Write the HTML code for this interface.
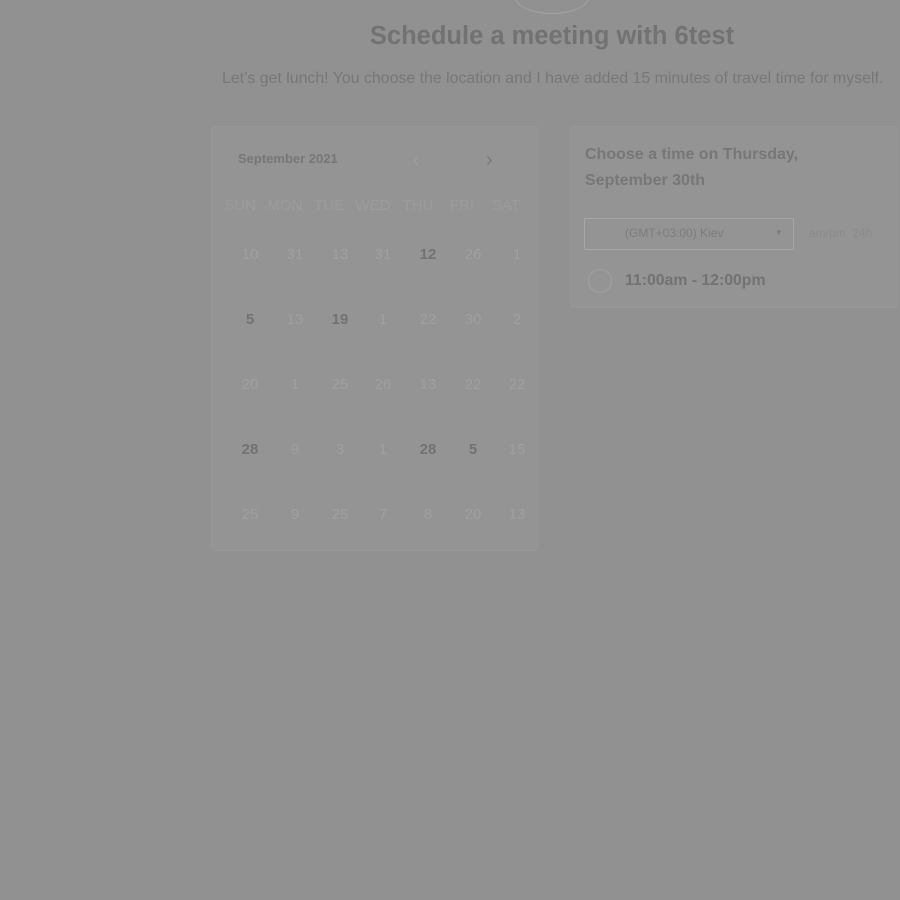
<!DOCTYPE html><html><head><style>
body{margin:0;width:900px;height:900px;background:#919191;font-family:"Liberation Sans",sans-serif;position:relative;overflow:hidden}
.a{position:absolute;white-space:nowrap}
.p{position:absolute;background:#949494;border:1px solid #979797;border-radius:3px}
.n{position:absolute;width:40px;text-align:center;font-size:15px;color:#a0a0a0;transform:translateX(-20px)}
.d{color:#727272;font-weight:bold}
.h{position:absolute;width:44px;text-align:center;font-size:15px;color:#9c9c9c;transform:translateX(-22px)}
</style></head><body>
<div class="a" style="left:515px;top:-20px;width:72px;height:32px;border-radius:50%;border:1px solid #a4a4a4"></div>
<div class="a" style="left:0;width:1104px;top:22px;text-align:center;font-size:25.5px;font-weight:bold;color:#727272">Schedule a meeting with 6test</div>
<div class="a" style="left:222px;top:70px;font-size:15.9px;color:#777">Let’s get lunch! You choose the location and I have added 15 minutes of travel time for myself.</div>
<div class="p" style="left:211px;top:126px;width:325px;height:423px"></div>
<div class="a" style="left:238px;top:151px;font-size:13px;font-weight:bold;color:#777">September 2021</div>
<div class="a" style="left:413px;top:150px;font-size:18px;color:#9e9e9e">‹</div>
<div class="a" style="left:486px;top:149px;font-size:20px;color:#7a7a7a">›</div>
<div class="h" style="left:240px;top:197px">SUN</div><div class="h" style="left:285px;top:197px">MON</div><div class="h" style="left:329px;top:197px">TUE</div><div class="h" style="left:373px;top:197px">WED</div><div class="h" style="left:418px;top:197px">THU</div><div class="h" style="left:462px;top:197px">FRI</div><div class="h" style="left:506px;top:197px">SAT</div>
<div id="g"></div>
<script>
var r=[["10","31","13","31","*12","26","1"],["*5","13","*19","1","22","30","2"],["20","1","25","26","13","22","22"],["*28","9","3","1","*28","*5","15"],["25","9","25","7","8","20","13"]];
var xs=[250,295,340,383,428,473,517],ys=[246,311,376,441,506],h="";
r.forEach(function(row,i){row.forEach(function(v,j){var b=v[0]=="*";h+='<div class="n'+(b?' d':'')+'" style="left:'+xs[j]+'px;top:'+ys[i]+'px">'+v.replace("*","")+'</div>';});});
document.getElementById("g").innerHTML=h;
</script>
<div class="p" style="left:570px;top:126px;width:326px;height:180px"></div>
<div class="a" style="left:585px;top:142px;font-size:16px;font-weight:bold;color:#777;line-height:26px">Choose a time on Thursday,<br>September 30th</div>
<div class="a" style="left:584px;top:218px;width:208px;height:30px;border:1px solid #a6a6a6;border-radius:2px"></div>
<div class="a" style="left:625px;top:226px;font-size:12px;color:#7c7c7c">(GMT+03:00) Kiev</div>
<div class="a" style="left:775px;top:228px;font-size:8px;color:#7c7c7c">▼</div>
<div class="a" style="left:809px;top:226px;font-size:12px;color:#8a8a8a">am/pm&nbsp; 24h</div>
<div class="a" style="left:588px;top:269px;width:22px;height:22px;border-radius:50%;border:1px solid #a2a2a2"></div>
<div class="a" style="left:625px;top:272px;font-size:15.8px;font-weight:bold;color:#727272">11:00am - 12:00pm</div>
</body></html>
